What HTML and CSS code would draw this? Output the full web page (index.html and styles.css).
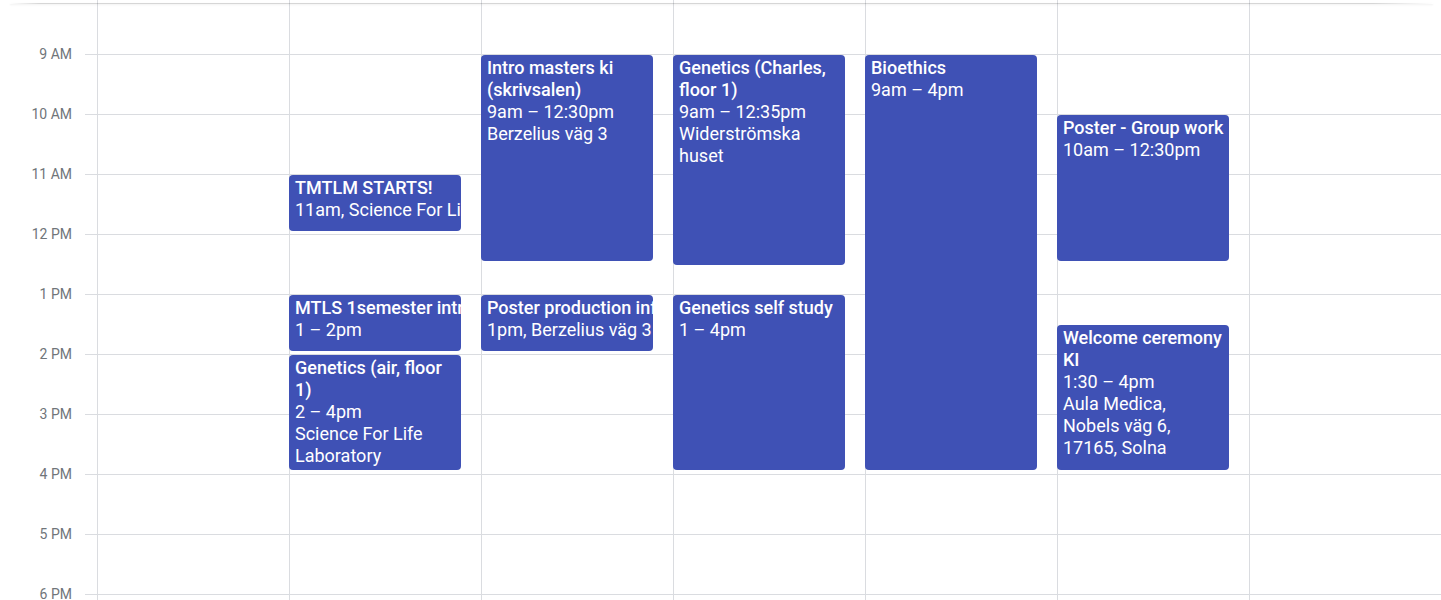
FILE: index.html
```html
<!DOCTYPE html>
<html lang="en">
<head>
<meta charset="utf-8">
<title>Week</title>
<link rel="stylesheet" href="styles.css">
</head>
<body>
<div class="cal">
  <div class="shadow"></div>
  <div class="gutter">
    <div class="slot"><span class="lbl">9 AM</span></div>
    <div class="slot"><span class="lbl">10 AM</span></div>
    <div class="slot"><span class="lbl">11 AM</span></div>
    <div class="slot"><span class="lbl">12 PM</span></div>
    <div class="slot"><span class="lbl">1 PM</span></div>
    <div class="slot"><span class="lbl">2 PM</span></div>
    <div class="slot"><span class="lbl">3 PM</span></div>
    <div class="slot"><span class="lbl">4 PM</span></div>
    <div class="slot"><span class="lbl">5 PM</span></div>
    <div class="slot"><span class="lbl">6 PM</span></div>
  </div>
  <div class="day"></div>
  <div class="day">
    <div class="ev short" style="top:175px;height:56px"><div class="t">TMTLM STARTS!</div><div class="l">11am, Science For Life Laboratory</div></div>
    <div class="ev short" style="top:295px;height:56px"><div class="t">MTLS 1semester introduction</div><div class="l">1 – 2pm</div></div>
    <div class="ev" style="top:355px;height:115px"><div class="t">Genetics (air, floor 1)</div><div class="l">2 – 4pm</div><div class="l">Science For Life Laboratory</div></div>
  </div>
  <div class="day">
    <div class="ev" style="top:55px;height:206px"><div class="t">Intro masters ki (skrivsalen)</div><div class="l">9am – 12:30pm</div><div class="l">Berzelius väg 3</div></div>
    <div class="ev short" style="top:295px;height:56px"><div class="t">Poster production info</div><div class="l">1pm, Berzelius väg 3</div></div>
  </div>
  <div class="day">
    <div class="ev" style="top:55px;height:210px"><div class="t">Genetics (Charles, floor 1)</div><div class="l">9am – 12:35pm</div><div class="l">Widerströmska huset</div></div>
    <div class="ev" style="top:295px;height:175px"><div class="t">Genetics self study</div><div class="l">1 – 4pm</div></div>
  </div>
  <div class="day">
    <div class="ev" style="top:55px;height:415px"><div class="t">Bioethics</div><div class="l">9am – 4pm</div></div>
  </div>
  <div class="day">
    <div class="ev" style="top:115px;height:146px"><div class="t">Poster - Group work</div><div class="l">10am – 12:30pm</div></div>
    <div class="ev" style="top:325px;height:145px"><div class="t">Welcome ceremony KI</div><div class="l">1:30 – 4pm</div><div class="l">Aula Medica, Nobels väg 6, 17165, Solna</div></div>
  </div>
  <div class="day"></div>
</div>
</body>
</html>
```
FILE: styles.css
```css
html, body {
  margin: 0;
  padding: 0;
  background: #fff;
  height: 600px;
  overflow: hidden;
}
body {
  font-family: Roboto, "Liberation Sans", Arial, sans-serif;
}
.cal {
  position: relative;
  display: flex;
  height: 600px;
}
.shadow {
  position: absolute;
  top: 3px;
  left: 10px;
  right: 8px;
  height: 1px;
  background: linear-gradient(to right, rgba(0,0,0,0) 0, rgba(0,0,0,0.16) 30px, rgba(0,0,0,0.16) calc(100% - 60px), rgba(0,0,0,0) 100%);
  box-shadow: 0 1px 2px rgba(0,0,0,0.08);
  z-index: 5;
}
.gutter {
  flex: 0 0 97px;
  padding-top: 54px;
}
.slot {
  position: relative;
  height: 60px;
  display: flex;
  justify-content: flex-end;
  padding-right: 25px;
}
.slot::after {
  content: "";
  position: absolute;
  top: 0;
  right: 0;
  width: 12px;
  height: 1px;
  background: #dadce0;
}
.lbl {
  margin-top: -8px;
  font-size: 14px;
  line-height: 16px;
  color: #70757a;
}
.day {
  flex: 1 1 0;
  min-width: 0;
  position: relative;
  border-left: 1px solid #dadce0;
  background-image: repeating-linear-gradient(to bottom, #dadce0 0, #dadce0 1px, transparent 1px, transparent 60px);
  background-position: 0 54px;
}
.ev {
  position: absolute;
  left: -1px;
  right: 20px;
  box-sizing: border-box;
  padding: 2px 3px 0 6px;
  background: #3f51b5;
  border-radius: 4px;
  color: #fff;
  font-size: 18px;
  line-height: 22px;
  overflow: hidden;
}
.t {
  font-weight: 500;
}
.short .t, .short .l {
  white-space: nowrap;
}
```
